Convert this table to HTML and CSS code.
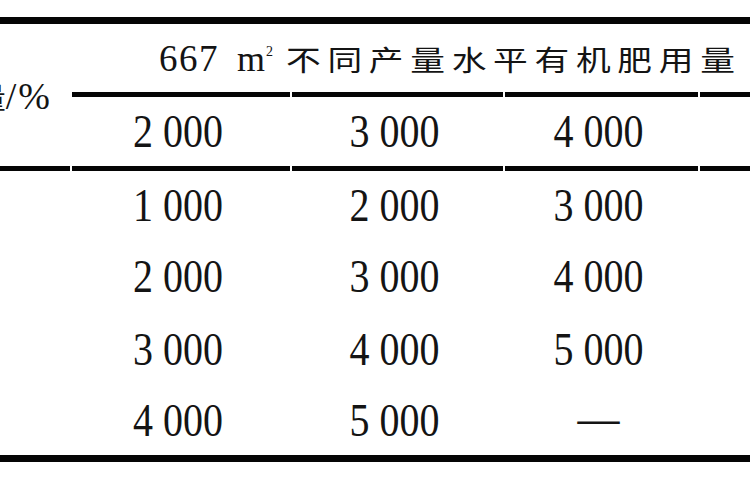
FILE: index.html
```html
<!DOCTYPE html>
<html lang="zh-CN">
<head>
<meta charset="utf-8">
<title>有机肥用量表</title>
<link rel="stylesheet" href="styles.css">
</head>
<body>
<div class="tbl">
  <div class="c lead"><span class="cn">有机质含量</span><span class="lat">/%</span></div>
  <div class="c head"><span class="hnum">667</span><span class="unit">m<sup>2</sup></span><span class="cn wide">不同产量水平有机肥用量</span></div>

  <div class="c sub"><span class="v">2 000</span></div>
  <div class="c sub"><span class="v">3 000</span></div>
  <div class="c sub"><span class="v">4 000</span></div>
  <div class="c sub"></div>

  <div class="c"></div>
  <div class="c"><span class="v">1 000</span></div>
  <div class="c"><span class="v">2 000</span></div>
  <div class="c"><span class="v">3 000</span></div>
  <div class="c"></div>

  <div class="c"></div>
  <div class="c"><span class="v">2 000</span></div>
  <div class="c"><span class="v">3 000</span></div>
  <div class="c"><span class="v">4 000</span></div>
  <div class="c"></div>

  <div class="c"></div>
  <div class="c"><span class="v">3 000</span></div>
  <div class="c"><span class="v">4 000</span></div>
  <div class="c"><span class="v">5 000</span></div>
  <div class="c"></div>

  <div class="c"></div>
  <div class="c"><span class="v">4 000</span></div>
  <div class="c"><span class="v">5 000</span></div>
  <div class="c"><span class="v dash">—</span></div>
  <div class="c"></div>
</div>
</body>
</html>
```

FILE: styles.css
```css
html, body {
  margin: 0;
  padding: 0;
  background: #ffffff;
  overflow: hidden;
}

body {
  width: 750px;
  height: 500px;
  color: #141414;
  font-family: "Liberation Serif", "Times New Roman", serif;
}

.tbl {
  display: grid;
  width: max-content;
  grid-template-columns: 260px 218px 211px 193px 200px;
  grid-template-rows: 68px 79px 70px 72px 74px 68px;
  column-gap: 2px;
  margin: 17px 0 0 -190px;
  border-top: 7px solid #050505;
  border-bottom: 7px solid #050505;
}

.c {
  box-sizing: border-box;
  display: flex;
  align-items: center;
  justify-content: center;
  padding-right: 6px;
  white-space: nowrap;
}

.lead {
  grid-row: 1 / span 2;
  justify-content: flex-end;
  padding-right: 18px;
  padding-top: 2px;
  border-bottom: 5px solid #050505;
}

.lead .cn {
  font-size: 29px;
}

.lead .lat {
  font-size: 38px;
  letter-spacing: 2px;
  line-height: 1;
}

.head {
  grid-column: 2 / -1;
  display: block;
  padding: 15px 0 0 87px;
  font-size: 37px;
  line-height: 40px;
}

.hnum {
  letter-spacing: 1.5px;
}

.unit {
  margin-left: 18px;
  font-size: 36px;
}

.unit sup {
  font-size: 14px;
  line-height: 0;
  vertical-align: 15px;
  margin-left: 1px;
}

.cn {
  font-family: "Noto Sans CJK SC", sans-serif;
}

.wide {
  display: inline-block;
  margin-left: 13px;
  font-size: 28px;
  letter-spacing: 5.4px;
  transform: scaleX(1.24);
  transform-origin: left center;
}

.sub {
  border-top: 5px solid #050505;
  border-bottom: 5px solid #050505;
}

.v {
  display: inline-block;
  font-size: 40px;
  line-height: 1;
  transform: scaleY(1.18);
}

.dash {
  font-size: 42px;
  margin-bottom: 8px;
}
```
